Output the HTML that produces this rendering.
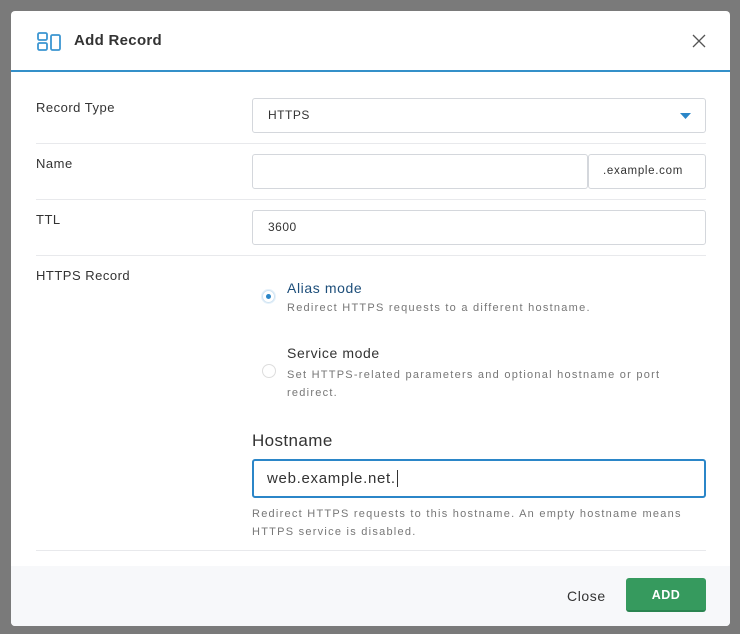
<!DOCTYPE html><html><head><style>
body{margin:0;width:740px;height:634px;background:#7a7a7a;font-family:"Liberation Sans",sans-serif;position:relative;overflow:hidden}
.m{position:absolute;left:11px;top:11px;width:719px;height:615px;background:#fff;border-radius:4px;overflow:hidden}
.hd{position:absolute;left:0;top:0;width:100%;height:59px;border-bottom:2px solid #3490c9}
.t{position:absolute;left:63px;top:21px;font-size:15px;font-weight:bold;color:#333;letter-spacing:0.3px}
.x{position:absolute;left:681px;top:23px}
.lbl{position:absolute;left:25px;font-size:13px;color:#333;letter-spacing:0.5px}
.inp{position:absolute;border:1px solid #d4d7dc;border-radius:3px;font-size:12px;color:#333;box-sizing:border-box;padding-left:15px;line-height:33px;height:35px;letter-spacing:0.5px}
.hr{position:absolute;left:25px;width:670px;height:1px;background:#e8e9ec}
.sm{font-size:11px;color:#777;position:absolute;letter-spacing:1.25px}
.ft{position:absolute;left:0;top:555px;width:100%;height:60px;background:#f7f8fa}
</style></head><body><div class="m">
<div class="hd">
<svg style="position:absolute;left:26px;top:21px" width="26" height="20" viewBox="0 0 26 20" fill="none" stroke="#3b95d1" stroke-width="1.8"><rect x="1" y="1" width="9" height="7" rx="1.5"/><rect x="1" y="11" width="9" height="7" rx="1.5"/><rect x="14" y="3" width="9" height="15" rx="1.5"/></svg>
<div class="t">Add Record</div>
<svg class="x" width="14" height="14" viewBox="0 0 14 14" stroke="#555" stroke-width="1.3"><path d="M1 1L13 13M13 1L1 13"/></svg>
</div>
<div class="lbl" style="top:89px">Record Type</div>
<div class="inp" style="left:241px;top:87px;width:454px">HTTPS<svg style="position:absolute;right:14px;top:14px" width="11" height="7"><path d="M0 0H11L5.5 6z" fill="#2b86c8"/></svg></div>
<div class="hr" style="top:132px"></div>
<div class="lbl" style="top:145px">Name</div>
<div class="inp" style="left:241px;top:143px;width:336px"></div>
<div class="inp" style="left:577px;top:143px;width:118px;padding-left:14px;font-size:11.5px;letter-spacing:0.7px">.example.com</div>
<div class="hr" style="top:188px"></div>
<div class="lbl" style="top:201px">TTL</div>
<div class="inp" style="left:241px;top:199px;width:454px">3600</div>
<div class="hr" style="top:244px"></div>
<div class="lbl" style="top:257px">HTTPS Record</div>
<div style="position:absolute;left:251px;top:279px;width:13px;height:13px;border-radius:50%;border:1px solid #cfe3f2;box-sizing:border-box;box-shadow:0 0 0 1px #e5f1fa"><div style="position:absolute;left:3px;top:3px;width:5px;height:5px;border-radius:50%;background:#2b86c8"></div></div>
<div style="position:absolute;left:276px;top:269px;font-size:14px;color:#1d4e7a;letter-spacing:0.6px">Alias mode</div>
<div class="sm" style="left:276px;top:291px">Redirect HTTPS requests to a different hostname.</div>
<div style="position:absolute;left:251px;top:353px;width:14px;height:14px;border-radius:50%;border:1px solid #ddd;box-sizing:border-box"></div>
<div style="position:absolute;left:276px;top:334px;font-size:14px;color:#333;letter-spacing:0.6px">Service mode</div>
<div class="sm" style="left:276px;top:355px;line-height:18px;width:405px">Set HTTPS-related parameters and optional hostname or port redirect.</div>
<div style="position:absolute;left:241px;top:420px;font-size:17px;color:#333;letter-spacing:0.4px">Hostname</div>
<div class="inp" style="left:241px;top:448px;width:454px;height:39px;border:2px solid #2b86c8;line-height:35px;font-size:15px;padding-left:13px;letter-spacing:0.7px">web.example.net.<span style="border-left:1px solid #333;margin-left:1px"></span></div>
<div class="sm" style="left:241px;top:494px;line-height:18px;width:450px">Redirect HTTPS requests to this hostname. An empty hostname means HTTPS service is disabled.</div>
<div class="hr" style="top:539px"></div>
<div class="ft">
<div style="position:absolute;left:556px;top:22px;font-size:14px;color:#333;letter-spacing:0.6px">Close</div>
<div style="position:absolute;left:615px;top:12px;width:80px;height:34px;background:#369a5e;border-radius:3px;border-bottom:2px solid #2a8450;box-sizing:border-box;color:#fff;font-size:12.5px;font-weight:bold;text-align:center;line-height:35px;letter-spacing:0.5px">ADD</div>
</div>
</div></body></html>
